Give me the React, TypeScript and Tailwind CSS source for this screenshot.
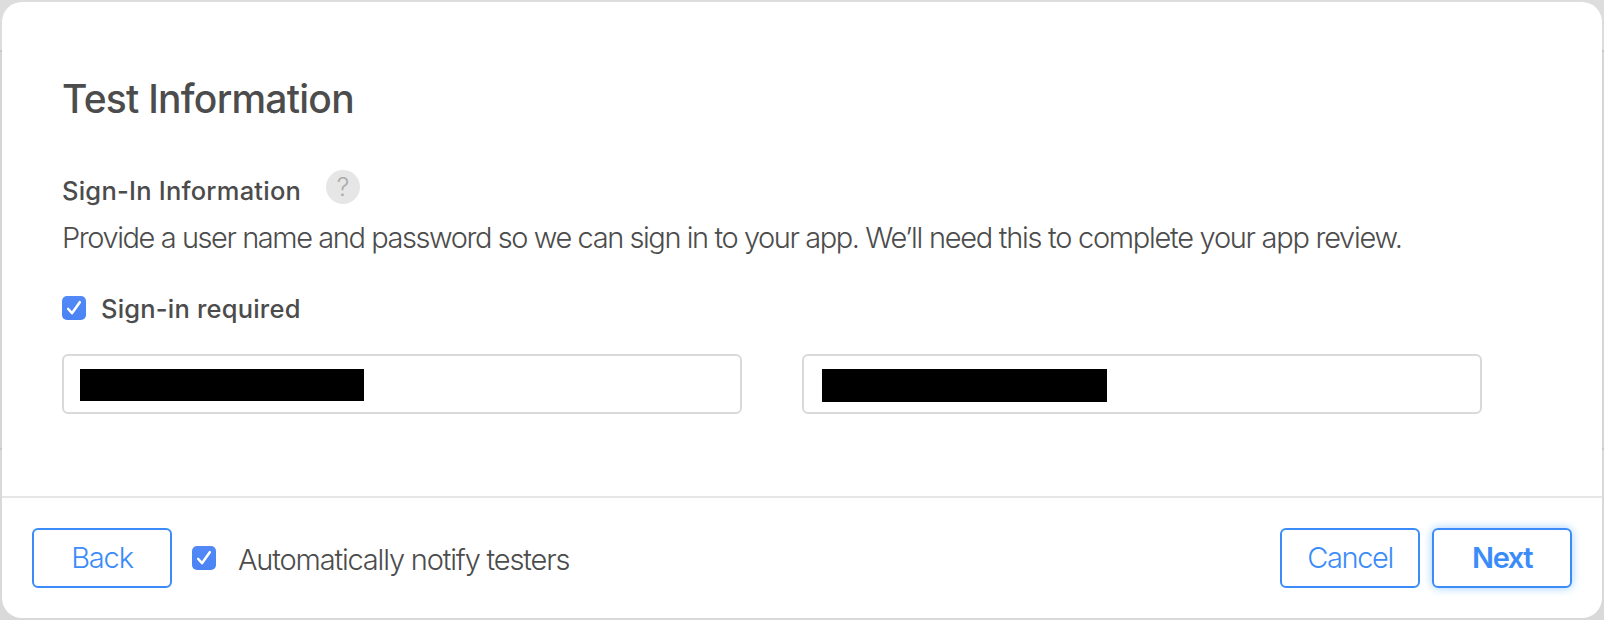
import React from "react";

function Checkbox() {
  return (
    <span className="flex size-6 shrink-0 items-center justify-center rounded-[5px] bg-linear-to-b from-[#5289f7] to-[#4a83f4]">
      <svg viewBox="0 0 24 24" className="size-6" fill="none">
        <path d="M6.2 13.9 10 18 18 6.8" stroke="#2f62cc" strokeOpacity="0.35" strokeWidth="2.6" strokeLinecap="round" strokeLinejoin="round" />
        <path d="M6.2 13 10 17.2 17.8 6.2" stroke="white" strokeWidth="2.6" strokeLinecap="round" strokeLinejoin="round" />
      </svg>
    </span>
  );
}

function Field({ bar }: { bar: string }) {
  return (
    <div className="h-[60px] w-[680px] rounded-md border-2 border-[#d9d9d9] bg-white">
      <div className={bar} />
    </div>
  );
}

export default function App() {
  return (
    <div className="h-[620px] w-[1604px] bg-[linear-gradient(to_bottom,#dddddd_50px,#c8c8c8_50px,#c8c8c8_52px,#d5d5d5_52px,#d5d5d5_448px,#c8c8c8_448px,#c8c8c8_450px,#d9d9d9_450px)] p-[2px] font-['Inter',sans-serif] text-[#4c4c4c]">
      <div className="flex h-[616px] flex-col overflow-hidden rounded-[20px] bg-white">
        <main className="h-[494px] pl-[60px] pt-[73px]">
          <h1 className="h-12 text-[39px] leading-[48px] font-medium tracking-[-0.75px] whitespace-nowrap">Test Information</h1>
          <div className="mt-[47px] flex h-[34px] items-start">
            <h2 className="mt-1 w-[239px] text-[25.5px] leading-[34px] font-medium tracking-[0.23px] whitespace-nowrap">Sign-In Information</h2>
            <span className="ml-[25px] flex size-[34px] items-center justify-center rounded-full bg-[#e6e6e6] text-[25px] leading-[34px] font-light text-[#ababab]">?</span>
          </div>
          <p className="mt-4 h-9 text-[29px] leading-9 font-light tracking-[-1.37px] whitespace-nowrap">
            <span className="tracking-[-1.43px]">Provide a user name and password so we can sign in to your app. </span>
            <span className="tracking-[-1.28px]">We’ll need this to complete your app review.</span>
          </p>
          <div className="mt-10 flex h-6 items-center gap-[15px]">
            <Checkbox />
            <span className="pt-[2px] text-[25.5px] leading-[34px] font-medium tracking-[0.2px] whitespace-nowrap">Sign-in required</span>
          </div>
          <div className="mt-[34px] flex gap-[60px]">
            <Field bar="mt-[13px] ml-4 h-8 w-[284px] bg-black" />
            <Field bar="mt-[13px] ml-[18px] h-[33px] w-[285px] bg-black" />
          </div>
        </main>
        <footer className="flex h-[122px] items-start border-t-2 border-[#e6e6e6] px-[30px] pt-[30px] text-[29px] font-light tracking-[-1.17px]">
          <button className="h-[60px] w-[140px] rounded-md border-2 border-[#3b8cf8] text-[#3b8cf8]">Back</button>
          <div className="ml-5 flex h-[60px] items-center gap-[22px]">
            <Checkbox />
            <span className="pt-1 whitespace-nowrap">Automatically notify testers</span>
          </div>
          <div className="ml-auto flex gap-3">
            <button className="h-[60px] w-[140px] rounded-md border-2 border-[#3b8cf8] tracking-[-1.4px] text-[#3b8cf8]">Cancel</button>
            <button className="h-[60px] w-[140px] rounded-md border-2 border-[#3b8cf8] font-semibold tracking-[-1.5px] text-[#3b8cf8] shadow-[0_0_10px_#9fd0ff]">Next</button>
          </div>
        </footer>
      </div>
    </div>
  );
}
